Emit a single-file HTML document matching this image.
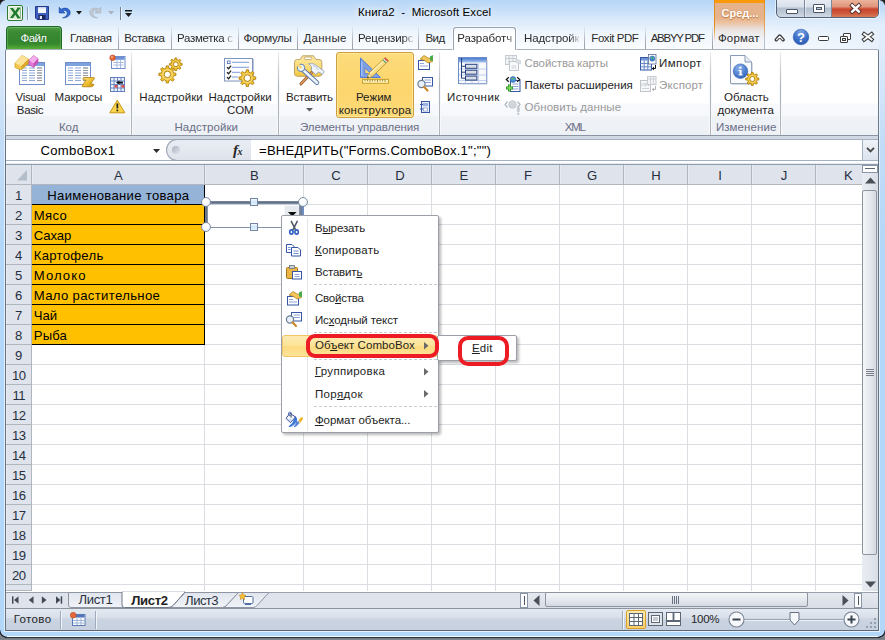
<!DOCTYPE html>
<html lang="ru"><head><meta charset="utf-8"><title>Книга2 - Microsoft Excel</title>
<style>
*{box-sizing:border-box;margin:0;padding:0}
html,body{width:885px;height:640px;overflow:hidden}
body{position:relative;font-family:"Liberation Sans","DejaVu Sans",sans-serif;font-size:12px;color:#1e1e1e;background:#c9ddf3}
div,span{position:absolute;white-space:nowrap}
svg{position:absolute;overflow:visible}
u{text-decoration:underline;text-underline-offset:1px;text-decoration-thickness:1px}
#frame{left:0;top:0;width:885px;height:640px;background:linear-gradient(180deg,#b6d6f7 0,#c6dff8 10px,#d9e9fb 19px,#e3effc 27px,#dfecfb 49px,#c3ddf8 140px,#b3d7f9 250px,#b3d7f9 640px)}
.tsep{top:27px;width:1px;height:22px;background:linear-gradient(rgba(154,161,171,.1),#a4abb6 70%,#9aa1ab)}
#tabglow{left:6px;top:25px;width:873px;height:24px;background:linear-gradient(rgba(255,255,255,0) 0,rgba(255,255,255,.45) 8px,rgba(255,255,255,.88) 100%);-webkit-mask-image:linear-gradient(90deg,#000 0,#000 86%,rgba(0,0,0,.35) 100%);mask-image:linear-gradient(90deg,#000 0,#000 86%,rgba(0,0,0,.35) 100%)}
#ribbon{left:5px;top:49px;width:874px;height:87px;background:linear-gradient(#ffffff 0,#ffffff 53px,#f8f9fc 54px,#f7f8fb 65px,#eff2f6 67px,#edf0f4 86px);border:1px solid #8b95a3;border-top-color:#a9b0ba;border-left-color:#7b8594;border-right-color:#6f7987;border-radius:2px 2px 0 0}
.gsep{top:52px;width:3px;height:83px;margin-left:-1px;background:linear-gradient(rgba(176,181,188,.25),#b0b5bc 40%);border-left:1px solid rgba(255,255,255,.9);border-right:1px solid rgba(255,255,255,.9)}
.ch{top:165px;height:20px;background:#dfe3ec;border-right:1px solid #b1b5bc;border-bottom:1px solid #b1b5bc;box-shadow:inset 1px 0 0 #e8ebf1}
.rh{left:6px;width:26px;height:20px;background:#dfe3ec;border-right:1px solid #b1b5bc;border-bottom:1px solid #b1b5bc;box-shadow:inset 1px 0 0 #e9edf3}
.msep{left:314px;width:123px;height:1px;background:repeating-linear-gradient(90deg,#c8cbd0 0,#c8cbd0 3px,transparent 3px,transparent 5px)}
</style></head><body>
<div id="frame"></div><div id="tabglow"></div>
<div style="left:358.0px;top:6px;font-size:11.5px;line-height:12px;color:#000;letter-spacing:0.09px;text-shadow:0 0 7px rgba(255,255,255,.95),0 0 12px rgba(255,255,255,.8),0 0 16px rgba(255,255,255,.6);">Книга2&nbsp; -&nbsp; Microsoft Excel</div><svg style="left:7px;top:5px" width="16" height="16" viewBox="0 0 16 16"><rect x=".5" y=".5" width="15" height="15" rx="1.5" fill="#f4f9f1" stroke="#2c7a30"/><rect x="2" y="2" width="12" height="12" fill="#dcecd5"/><path d="M3 3 L6.6 8 L3 13 H6 L8.2 9.8 L10.4 13 H13.4 L9.8 8 L13.4 3 H10.4 L8.2 6.2 L6 3Z" fill="#1d7a2b"/><path d="M10 2.5H13.5V13.5H10" fill="none" stroke="#7fb27c" stroke-width=".8"/></svg>
<div style="left:27px;top:7px;width:1px;height:13px;background:#8a9db5"></div><div style="left:28px;top:7px;width:1px;height:13px;background:#eef4fb"></div>
<svg style="left:35px;top:6px" width="14" height="14" viewBox="0 0 14 14"><path d="M.5 .5H13.5V13.5H2L.5 12Z" fill="#3f5fbe" stroke="#233a86"/><rect x="3" y="1" width="8" height="6" fill="#f3f6fc"/><rect x="3" y="1" width="8" height="1.4" fill="#c9d4ee"/><rect x="3.5" y="9" width="7" height="4.5" fill="#1b275f"/><rect x="4.8" y="10" width="2.2" height="3" fill="#e4eaf8"/></svg>
<svg style="left:58px;top:6px" width="13" height="13" viewBox="0 0 13 13"><path d="M1.2 1.2 L1.2 7 L7 7 L4.9 4.9 C6.6 3.8 9.4 4.6 9.3 7.2 C9.2 9.6 7 11.2 4.6 11.9 C9 12 12.2 9.8 12.2 6.6 C12.2 2.6 7 0.8 3.2 3.2Z" fill="#3068d0" stroke="#1c449c" stroke-width=".6"/></svg>
<svg style="left:76px;top:11px" width="6" height="4"><path d="M0 0H6L3 3.5Z" fill="#1a1a1a"/></svg>
<svg style="left:89px;top:6px" width="13" height="13" viewBox="0 0 13 13"><path d="M11.8 1.2 L11.8 7 L6 7 L8.1 4.9 C6.4 3.8 3.6 4.6 3.7 7.2 C3.8 9.6 6 11.2 8.4 11.9 C4 12 .8 9.8 .8 6.6 C.8 2.6 6 0.8 9.8 3.2Z" fill="#c0c8d4" stroke="#a3adbb" stroke-width=".6"/></svg>
<svg style="left:108px;top:11px" width="6" height="4"><path d="M0 0H6L3 3.5Z" fill="#a9b1bd"/></svg>
<div style="left:120px;top:7px;width:1px;height:13px;background:#6f8098"></div><div style="left:121px;top:7px;width:1px;height:13px;background:#eef4fb"></div>
<svg style="left:125px;top:10px" width="8" height="8"><rect x="0" y="0" width="7" height="1.5" fill="#1a1a1a"/><path d="M0 3H7L3.5 7Z" fill="#1a1a1a"/></svg>
<div style="left:776px;top:-1px;width:103px;height:19px;border:1px solid #55637a;border-radius:0 0 5px 5px;background:linear-gradient(#e6ebf2 0,#d9e0ea 40%,#b4c0cf 48%,#bcc7d5 70%,#d3dbe6 100%);overflow:hidden;box-shadow:0 0 0 1px rgba(255,255,255,.5)">
<div style="left:27px;top:0;width:1px;height:19px;background:#7b889b"></div><div style="left:28px;top:0;width:1px;height:19px;background:rgba(255,255,255,.5)"></div>
<div style="left:54px;top:0;width:1px;height:19px;background:#7b889b"></div>
<div style="left:55px;top:0;width:48px;height:19px;background:linear-gradient(#eab49a 0,#e0957c 35%,#c8452c 48%,#cd5a3e 70%,#df8f66 100%)"></div>
<div style="left:9px;top:9px;width:12px;height:5px;border:1px solid #4a5567;background:#fff;border-radius:1px"></div>
<div style="left:36px;top:4px;width:12px;height:9px;border:1px solid #4a5567;background:#fff;border-radius:1px"></div><div style="left:39px;top:7px;width:6px;height:3px;border:1px solid #4a5567;background:#c4cedb"></div>
<svg style="left:73px;top:4px" width="11" height="9"><path d="M2.200 1.500 L8.800 7.500 M8.800 1.500 L2.200 7.500" stroke="#4b2f2a" stroke-width="4.200" stroke-linecap="square"/><path d="M2.200 1.500 L8.800 7.500 M8.800 1.500 L2.200 7.500" stroke="#fff" stroke-width="2.400" stroke-linecap="square"/></svg>
</div>
<div style="left:0;top:0;width:5px;height:5px;background:radial-gradient(circle at 6px 6px,rgba(0,0,0,0) 5px,#1c1c1c 6.500px)"></div>
<div style="left:880px;top:0;width:5px;height:5px;background:radial-gradient(circle at -1px 6px,rgba(0,0,0,0) 5px,#1c1c1c 6.500px)"></div>
<div style="left:714px;top:0;width:51px;height:49px;background:linear-gradient(#fb9a06 0,#f89a0e 3px,#e4b28b 3.5px,#e5b48e 18px,#ecc09b 22px,#e8d2c4 26px,#ebe4e2 30px,#f1f2f6 38px,#f7f8fb 49px)"></div><div style="left:714px;top:0;width:1px;height:40px;background:linear-gradient(#e88a1c 0,#e88a1c 26px,rgba(232,170,110,.2) 40px)"></div><div style="left:764px;top:0;width:1px;height:49px;background:linear-gradient(#e88a1c 0,#e9a252 26px,#b9c4d4 40px,#aebdd0 49px)"></div>
<div style="left:721.5px;top:7px;font-size:11px;line-height:12px;color:#fff;letter-spacing:0.01px;font-weight:bold;text-shadow:0 1px 1px #c47a45,0 0 2px #c98a5a;">Сред...</div><div style="left:6px;top:26px;width:56px;height:24px;background:linear-gradient(#4e9d47 0,#3b8b34 5px,#34852f 14px,#378a2f 17px,#4ba033 20px,#68bd39 24px);border:1px solid #1d6a28;border-bottom:0;border-radius:4px 4px 0 0;box-shadow:inset 0 1px 0 #6fb766,inset 1px 0 0 rgba(120,190,110,.45),inset -1px 0 0 rgba(120,190,110,.45)"></div>
<div style="left:20.5px;top:32px;font-size:11.5px;line-height:12px;color:#fff;letter-spacing:-0.59px;text-shadow:0 0 1px #1d5a20;">Файл</div><div class="tsep" style="left:118px"></div><div class="tsep" style="left:171px"></div><div class="tsep" style="left:238px"></div><div class="tsep" style="left:297px"></div><div class="tsep" style="left:352px"></div><div class="tsep" style="left:418px"></div><div class="tsep" style="left:584px"></div><div class="tsep" style="left:645px"></div><div class="tsep" style="left:712px"></div>
<div style="left:453px;top:27px;width:63px;height:23px;background:linear-gradient(#f4f8fc,#fff 8px);border:1px solid #98a1ae;border-bottom:0;border-radius:3px 3px 0 0;box-shadow:0 0 0 1px rgba(255,255,255,.6);z-index:3"></div>
<div style="left:70.1px;top:32px;font-size:11.5px;line-height:12px;color:#2b2b2b;letter-spacing:-0.31px;">Главная</div><div style="left:124.2px;top:32px;font-size:11.5px;line-height:12px;color:#2b2b2b;letter-spacing:-0.32px;">Вставка</div><div style="left:177.0px;top:32px;font-size:11.5px;line-height:12px;color:#2b2b2b;letter-spacing:-0.29px;-webkit-mask-image:linear-gradient(90deg,#000 82%,rgba(0,0,0,.15) 100%);mask-image:linear-gradient(90deg,#000 82%,rgba(0,0,0,.15) 100%);">Разметка с</div><div style="left:243.5px;top:32px;font-size:11.5px;line-height:12px;color:#2b2b2b;letter-spacing:-0.29px;">Формулы</div><div style="left:303.5px;top:32px;font-size:11.5px;line-height:12px;color:#2b2b2b;letter-spacing:0.25px;">Данные</div><div style="left:358.1px;top:32px;font-size:11.5px;line-height:12px;color:#2b2b2b;letter-spacing:-0.15px;-webkit-mask-image:linear-gradient(90deg,#000 82%,rgba(0,0,0,.15) 100%);mask-image:linear-gradient(90deg,#000 82%,rgba(0,0,0,.15) 100%);">Рецензирс</div><div style="left:425.4px;top:32px;font-size:11.5px;line-height:12px;color:#2b2b2b;letter-spacing:-0.45px;">Вид</div><div style="left:524.0px;top:32px;font-size:11.5px;line-height:12px;color:#2b2b2b;letter-spacing:-0.15px;-webkit-mask-image:linear-gradient(90deg,#000 82%,rgba(0,0,0,.15) 100%);mask-image:linear-gradient(90deg,#000 82%,rgba(0,0,0,.15) 100%);">Надстройк</div><div style="left:591.3px;top:32px;font-size:11.5px;line-height:12px;color:#2b2b2b;letter-spacing:-0.44px;">Foxit PDF</div><div style="left:650.7px;top:32px;font-size:11.5px;line-height:12px;color:#2b2b2b;letter-spacing:-1.26px;">ABBYY PDF</div><div style="left:718.0px;top:32px;font-size:11.5px;line-height:12px;color:#2b2b2b;letter-spacing:0.13px;">Формат</div><div style="left:457.3px;top:32px;font-size:11.5px;line-height:12px;color:#2b2b2b;letter-spacing:-0.09px;z-index:4;-webkit-mask-image:linear-gradient(90deg,#000 86%,rgba(0,0,0,.55) 100%);mask-image:linear-gradient(90deg,#000 86%,rgba(0,0,0,.55) 100%);">Разработч</div><svg style="left:774px;top:32px" width="12" height="10"><path d="M2.200 7.800 L5.700 4 L9.200 7.800" fill="none" stroke="#3a3a3a" stroke-width="3.400" stroke-linejoin="round" stroke-linecap="round"/><path d="M2.600 7.600 L5.700 4.300 L8.800 7.600" fill="none" stroke="#fff" stroke-width="1.200" stroke-linecap="round"/></svg>
<svg style="left:793px;top:29px" width="17" height="17"><defs><radialGradient id="hg" cx=".5" cy=".2" r=".9"><stop offset="0" stop-color="#7fa6e6"/><stop offset=".55" stop-color="#3a6ec6"/><stop offset="1" stop-color="#2a56aa"/></radialGradient></defs><circle cx="8" cy="8" r="7.800" fill="url(#hg)" stroke="#3562b4" stroke-width=".6"/><text x="8" y="12.600" text-anchor="middle" font-family="Liberation Sans,sans-serif" font-weight="bold" font-size="13" fill="#fff">?</text></svg>
<div style="left:818px;top:36px;width:11px;height:5px;border:1.500px solid #3b3b3b;background:#fff;border-radius:1.500px"></div>
<div style="left:843px;top:32.500px;width:8px;height:7px;border:1.500px solid #3b3b3b;background:#fff;border-radius:1px"></div><div style="left:839.500px;top:35.500px;width:8px;height:7.500px;border:1.500px solid #3b3b3b;background:#fff;border-radius:1px"></div><div style="left:841.500px;top:38px;width:4px;height:3px;border:1px solid #3b3b3b;background:#dfe6f0"></div>
<svg style="left:862px;top:32px" width="12" height="10"><path d="M2.200 2 L9.600 7.600 M9.600 2 L2.200 7.600" stroke="#3a3a3a" stroke-width="4" stroke-linecap="square"/><path d="M2.200 2 L9.600 7.600 M9.600 2 L2.200 7.600" stroke="#fff" stroke-width="1.900" stroke-linecap="square"/></svg>
<div id="ribbon"></div>
<div class="gsep" style="left:131px"></div><div class="gsep" style="left:278px"></div><div class="gsep" style="left:439px"></div><div class="gsep" style="left:710px"></div><div class="gsep" style="left:780px"></div><div style="left:58.9px;top:121px;font-size:11.5px;line-height:12px;color:#6a6e86;letter-spacing:0.02px;">Код</div><div style="left:174.5px;top:121px;font-size:11.5px;line-height:12px;color:#6a6e86;letter-spacing:0.03px;">Надстройки</div><div style="left:300.1px;top:121px;font-size:11.5px;line-height:12px;color:#6a6e86;letter-spacing:-0.11px;">Элементы управления</div><div style="left:564.7px;top:121px;font-size:11.5px;line-height:12px;color:#6a6e86;letter-spacing:-1.17px;">XML</div><div style="left:715.9px;top:121px;font-size:11.5px;line-height:12px;color:#6a6e86;letter-spacing:0.08px;">Изменение</div>
<div style="left:336px;top:52px;width:78px;height:66px;border:1px solid #cf9f3c;border-radius:3px;background:linear-gradient(#fcdc7c 0,#fdd872 30%,#fcd56d 60%,#fdda78 100%);box-shadow:inset 0 0 0 1px rgba(255,236,170,.7)"></div>
<div style="left:15.4px;top:91px;font-size:11.5px;line-height:12px;color:#1e1e1e;letter-spacing:-0.18px;">Visual</div><div style="left:16.8px;top:104px;font-size:11.5px;line-height:12px;color:#1e1e1e;letter-spacing:-0.33px;">Basic</div><div style="left:54.5px;top:91px;font-size:11.5px;line-height:12px;color:#1e1e1e;letter-spacing:-0.04px;">Макросы</div><div style="left:139.3px;top:91px;font-size:11.5px;line-height:12px;color:#1e1e1e;letter-spacing:0.03px;">Надстройки</div><div style="left:208.4px;top:91px;font-size:11.5px;line-height:12px;color:#1e1e1e;letter-spacing:0.03px;">Надстройки</div><div style="left:227.1px;top:104px;font-size:11.5px;line-height:12px;color:#1e1e1e;letter-spacing:-0.22px;">COM</div><div style="left:286.1px;top:91px;font-size:11.5px;line-height:12px;color:#1e1e1e;letter-spacing:-0.25px;">Вставить</div><svg style="left:306px;top:108px" width="7" height="4"><path d="M0 0H7L3.5 3.5Z" fill="#5a5a5a"/></svg><div style="left:355.9px;top:91px;font-size:11.5px;line-height:12px;color:#1e1e1e;letter-spacing:0.04px;">Режим</div><div style="left:338.7px;top:104px;font-size:11.5px;line-height:12px;color:#1e1e1e;letter-spacing:0.19px;">конструктора</div><div style="left:447.0px;top:91px;font-size:11.5px;line-height:12px;color:#1e1e1e;letter-spacing:0.46px;">Источник</div><div style="left:724.1px;top:91px;font-size:11.5px;line-height:12px;color:#1e1e1e;letter-spacing:-0.07px;">Область</div><div style="left:717.4px;top:104px;font-size:11.5px;line-height:12px;color:#1e1e1e;letter-spacing:0.05px;">документа</div>
<div style="left:524.6px;top:57px;font-size:11.5px;line-height:12px;color:#9a9a9a;letter-spacing:-0.13px;">Свойства карты</div><div style="left:524.6px;top:79px;font-size:11.5px;line-height:12px;color:#1e1e1e;letter-spacing:-0.02px;">Пакеты расширения</div><div style="left:524.6px;top:101px;font-size:11.5px;line-height:12px;color:#9a9a9a;letter-spacing:0.05px;">Обновить данные</div><div style="left:659.0px;top:57px;font-size:11.5px;line-height:12px;color:#1e1e1e;letter-spacing:0.42px;">Импорт</div><div style="left:659.0px;top:79px;font-size:11.5px;line-height:12px;color:#9a9a9a;letter-spacing:0.15px;">Экспорт</div>
<svg style="left:0;top:0" width="885" height="140"><defs><linearGradient id="gold" x1="0" y1="0" x2="1" y2="1"><stop offset="0" stop-color="#fbe69a"/><stop offset=".5" stop-color="#efc232"/><stop offset="1" stop-color="#c9940f"/></linearGradient><linearGradient id="bluehdr" x1="0" y1="0" x2="0" y2="1"><stop offset="0" stop-color="#4a7bd0"/><stop offset="1" stop-color="#a9c5ef"/></linearGradient><linearGradient id="steel" x1="0" y1="0" x2="1" y2="1"><stop offset="0" stop-color="#f4f8fd"/><stop offset="1" stop-color="#8ea6c8"/></linearGradient></defs><rect x="19.5" y="62.5" width="25" height="22" fill="#fff" stroke="#6e8fcb"/><rect x="20" y="63" width="24" height="3" fill="#7ea2de"/><path d="M22 68H27M29 68H35M37 68H42" stroke="#8fa9db" stroke-width="1"/><path d="M37 68H42" stroke="#9a9a9a" stroke-width="1"/><path d="M22 70.5H27M29 70.5H35M37 70.5H42" stroke="#8fa9db" stroke-width="1"/><path d="M37 70.5H42" stroke="#9a9a9a" stroke-width="1"/><path d="M22 73.0H27M29 73.0H35M37 73.0H42" stroke="#8fa9db" stroke-width="1"/><path d="M37 73.0H42" stroke="#9a9a9a" stroke-width="1"/><path d="M22 75.5H27M29 75.5H35M37 75.5H42" stroke="#8fa9db" stroke-width="1"/><path d="M37 75.5H42" stroke="#9a9a9a" stroke-width="1"/><path d="M22 78.0H27M29 78.0H35M37 78.0H42" stroke="#8fa9db" stroke-width="1"/><path d="M37 78.0H42" stroke="#9a9a9a" stroke-width="1"/><path d="M22 80.5H27M29 80.5H35M37 80.5H42" stroke="#8fa9db" stroke-width="1"/><path d="M37 80.5H42" stroke="#9a9a9a" stroke-width="1"/><path d="M15 63 L22 55.5 L28.5 59 L28.5 63.5 L21 70 L15 67.5Z" fill="#f2c94c" stroke="#c99a1e" stroke-width=".7"/><path d="M15 63 L22 55.5 L28.5 59 L21.5 66Z" fill="#fbe39a"/><path d="M21.5 66 L28.5 59 L28.5 63.5 L21 70Z" fill="#d9a62a"/><path d="M29 60 L33.5 55.5 L38 58.5 L38 62.5 L33.5 67.5 L29 64.5Z" fill="#e27ad6" stroke="#b14aa6" stroke-width=".7"/><path d="M29 60 L33.5 55.5 L38 58.5 L33.5 63.5Z" fill="#f3b0ec"/><path d="M33.5 63.5 L38 58.5 L38 62.5 L33.5 67.5Z" fill="#c455b8"/><rect x="65.5" y="62.5" width="25" height="22" fill="#fff" stroke="#6e8fcb"/><rect x="66" y="63" width="24" height="3" fill="#7ea2de"/><path d="M68 68H73M75 68H81M83 68H88" stroke="#8fa9db" stroke-width="1"/><path d="M83 68H88" stroke="#9a9a9a" stroke-width="1"/><path d="M68 70.5H73M75 70.5H81M83 70.5H88" stroke="#8fa9db" stroke-width="1"/><path d="M83 70.5H88" stroke="#9a9a9a" stroke-width="1"/><path d="M68 73.0H73M75 73.0H81M83 73.0H88" stroke="#8fa9db" stroke-width="1"/><path d="M83 73.0H88" stroke="#9a9a9a" stroke-width="1"/><path d="M68 75.5H73M75 75.5H81M83 75.5H88" stroke="#8fa9db" stroke-width="1"/><path d="M83 75.5H88" stroke="#9a9a9a" stroke-width="1"/><path d="M68 78.0H73M75 78.0H81M83 78.0H88" stroke="#8fa9db" stroke-width="1"/><path d="M83 78.0H88" stroke="#9a9a9a" stroke-width="1"/><path d="M68 80.5H73M75 80.5H81M83 80.5H88" stroke="#8fa9db" stroke-width="1"/><path d="M83 80.5H88" stroke="#9a9a9a" stroke-width="1"/><path d="M84 77.5 H93.5 Q95 77.5 94 79 L90.5 84 H93 Q94.5 84 93.5 85.5 Q92.5 86.8 90.5 86.8 H83 Q81.5 86.8 82.5 85.3 L86 80 H84 Q82.6 80 83 78.5 Q83.3 77.5 84 77.5Z" fill="url(#gold)" stroke="#b07e0c" stroke-width=".8"/><rect x="111.500" y="56.500" width="13.500" height="12" fill="#fff" stroke="#6e8fcb"/><rect x="112" y="57" width="12.500" height="2.800" fill="#6d93d6"/><path d="M113.500 62.500H123.500M113.500 65H123.500M117 60V68M120.500 60V68" stroke="#a9bce0"/><circle cx="112.600" cy="57.800" r="2.800" fill="#e4683a" stroke="#b8441b" stroke-width=".6"/><circle cx="111.900" cy="57" r="1" fill="#f6b49a"/><rect x="110.5" y="77.5" width="14" height="14" fill="#eef2fa" stroke="#5f7fbf"/><path d="M110.5 81H124.5M110.5 84.5H124.5M110.5 88H124.5M114 77.5V91.5M117.5 77.5V91.5M121 77.5V91.5" stroke="#5f7fbf" stroke-width=".9"/><rect x="114.5" y="85" width="3" height="2.6" fill="#d9534f"/><rect x="121.5" y="85" width="3" height="2.6" fill="#d9534f"/><path d="M116 82.5 L119.5 80.5 V81.8 H123 V83.4 H119.5 V84.5Z" fill="#111"/><path d="M117.3 100.2 L124.8 112.8 H109.8Z" fill="#fbd44c" stroke="#c89612" stroke-width="1" stroke-linejoin="round"/><rect x="116.5" y="103.5" width="1.7" height="5" fill="#222"/><rect x="116.5" y="109.6" width="1.7" height="1.7" fill="#222"/><path d="M173.53 72.93 L175.92 73.26 L175.92 75.54 L173.53 75.87 L172.77 77.69 L174.24 79.62 L172.62 81.24 L170.69 79.77 L168.87 80.53 L168.54 82.92 L166.26 82.92 L165.93 80.53 L164.11 79.77 L162.18 81.24 L160.56 79.62 L162.03 77.69 L161.27 75.87 L158.88 75.54 L158.88 73.26 L161.27 72.93 L162.03 71.11 L160.56 69.18 L162.18 67.56 L164.11 69.03 L165.93 68.27 L166.26 65.88 L168.54 65.88 L168.87 68.27 L170.69 69.03 L172.62 67.56 L174.24 69.18 L172.77 71.11Z" fill="#efc22f" stroke="#b07e0c" stroke-width=".9" stroke-linejoin="round"/><circle cx="167.4" cy="74.4" r="4.75" fill="none" stroke="#f9e08a" stroke-width="1.50" opacity=".8"/><circle cx="167.4" cy="74.4" r="3.2" fill="#fff" stroke="#b07e0c" stroke-width=".9"/><path d="M180.27 63.23 L182.14 63.45 L182.14 65.15 L180.27 65.37 L179.72 66.70 L180.89 68.18 L179.68 69.39 L178.20 68.22 L176.87 68.77 L176.65 70.64 L174.95 70.64 L174.73 68.77 L173.40 68.22 L171.92 69.39 L170.71 68.18 L171.88 66.70 L171.33 65.37 L169.46 65.15 L169.46 63.45 L171.33 63.23 L171.88 61.90 L170.71 60.42 L171.92 59.21 L173.40 60.38 L174.73 59.83 L174.95 57.96 L176.65 57.96 L176.87 59.83 L178.20 60.38 L179.68 59.21 L180.89 60.42 L179.72 61.90Z" fill="#efc22f" stroke="#b07e0c" stroke-width=".9" stroke-linejoin="round"/><circle cx="175.8" cy="64.3" r="3.50" fill="none" stroke="#f9e08a" stroke-width="0.60" opacity=".8"/><circle cx="175.8" cy="64.3" r="2.4" fill="#fff" stroke="#b07e0c" stroke-width=".9"/><rect x="224.5" y="58.5" width="28" height="22.5" fill="#fdfdfe" stroke="#7d96c4"/><path d="M225 81.5H253M253.5 59V81.5" stroke="#bcc6d8" stroke-width="1"/><rect x="227.5" y="61" width="2.6" height="2.6" fill="#fff" stroke="#4c6fbd" stroke-width=".8"/><path d="M232 62.3H249M232 67.3H249M232 72.3H240M232 77H238" stroke="#7d9bd6" stroke-width="1"/><path d="M227 67.2 L228.6 68.8 L231 65.6" fill="none" stroke="#222" stroke-width="1.3"/><path d="M227 72.2 L228.6 73.8 L231 70.6" fill="none" stroke="#222" stroke-width="1.3"/><path d="M227 77.2 L228.6 78.8 L231 75.6" fill="none" stroke="#222" stroke-width="1.3"/><path d="M253.33 76.68 L255.73 76.98 L255.73 79.22 L253.33 79.52 L252.60 81.29 L254.08 83.20 L252.50 84.78 L250.59 83.30 L248.82 84.03 L248.52 86.43 L246.28 86.43 L245.98 84.03 L244.21 83.30 L242.30 84.78 L240.72 83.20 L242.20 81.29 L241.47 79.52 L239.07 79.22 L239.07 76.98 L241.47 76.68 L242.20 74.91 L240.72 73.00 L242.30 71.42 L244.21 72.90 L245.98 72.17 L246.28 69.77 L248.52 69.77 L248.82 72.17 L250.59 72.90 L252.50 71.42 L254.08 73.00 L252.60 74.91Z" fill="#efc22f" stroke="#b07e0c" stroke-width=".9" stroke-linejoin="round"/><circle cx="247.4" cy="78.1" r="4.70" fill="none" stroke="#f9e08a" stroke-width="1.20" opacity=".8"/><circle cx="247.4" cy="78.1" r="3.3" fill="#fff" stroke="#b07e0c" stroke-width=".9"/><defs><linearGradient id="tbx" x1="0" y1="0" x2="0" y2="1"><stop offset="0" stop-color="#fdeaa4"/><stop offset=".55" stop-color="#fbdc78"/><stop offset="1" stop-color="#f3c63c"/></linearGradient></defs><path d="M297.500 59.500 H300 L302.500 55.800 H313.500 L316 59.500 H319 Q321.800 59.500 321.800 62.300 V73.500 Q321.800 76.300 319 76.300 H297.500 Q294.500 76.300 294.500 73.500 V62.300 Q294.500 59.500 297.500 59.500Z" fill="url(#tbx)" stroke="#b99a5a" stroke-width=".9"/><rect x="304.300" y="57" width="7.500" height="2.600" rx="1.300" fill="#fff" stroke="#b99a5a" stroke-width=".8"/><path d="M301 83.800 L312.500 71.800" stroke="#9c5a24" stroke-width="3" stroke-linecap="round"/><path d="M301 83.800 L312.500 71.800" stroke="#dda066" stroke-width="1.300" stroke-linecap="round"/><path d="M308.500 63.600 Q314.500 62.500 318.500 67 L324.300 71.500 L322.300 74.300 L318.800 72 L315.500 74.500 L311.500 70.500 Q313 66.500 308.500 63.600Z" fill="#f1f5fa" stroke="#8a9cb8" stroke-width=".8" stroke-linejoin="round"/><path d="M313 65.500 Q316.500 66.500 318 70" stroke="#c3cfe0" stroke-width="1.200" fill="none"/><path d="M302 69 L317 82.800" stroke="#5f7ea9" stroke-width="4.600" stroke-linecap="round"/><path d="M302 69 L317 82.800" stroke="#eef3fa" stroke-width="2.600" stroke-linecap="round"/><circle cx="301" cy="67.800" r="3.700" fill="#eef3fa" stroke="#5f7ea9" stroke-width="1"/><path d="M297 63.800 L301.300 68" stroke="#fbdc78" stroke-width="2.800"/><path d="M360.500 58 V77.500 H380.500Z" fill="#7fa1e4" stroke="#4f7bd6" stroke-width="1" stroke-linejoin="round"/><path d="M364.800 67.800 V73.600 H370.800Z" fill="#fbd672" stroke="#4f7bd6" stroke-width=".8"/><path d="M361.700 61.500 V76.300" stroke="#a9c3f3" stroke-width="1.200"/><path d="M367.300 78 L368.800 73.200 L385.200 57.600 L388.600 60.800 L372.200 76.600Z" fill="#fbdc80" stroke="#b08a2a" stroke-width=".8" stroke-linejoin="round"/><path d="M369.800 73.800 L385.800 58.600" stroke="#fff3c4" stroke-width="1.100"/><path d="M385.200 57.600 L388.600 60.800 L387.300 62 L383.900 58.800Z" fill="#e0524c"/><path d="M383.900 58.800 L387.300 62 L386.500 62.800 L383.100 59.600Z" fill="#dfe6ee"/><path d="M383.100 59.600 L386.500 62.800 L385.900 63.400 L382.500 60.200Z" fill="#3d9a55"/><path d="M367.300 78 L368.800 73.200 L372.200 76.600Z" fill="#f8e6c4" stroke="#b08a2a" stroke-width=".6"/><path d="M367.300 78 L367.900 76.200 L369.100 77.400Z" fill="#222"/><rect x="362.500" y="79.300" width="26" height="4" fill="#fdf0b4" stroke="#c29a22" stroke-width=".9"/><path d="M365 79.500V81.300M367.500 79.500V81.300M370 79.500V82M372.500 79.500V81.300M375 79.500V81.300M377.500 79.500V82M380 79.500V81.300M382.500 79.500V81.300M385 79.500V82" stroke="#9a7418" stroke-width=".8"/><rect x="418.5" y="60.5" width="11" height="9" fill="#fff" stroke="#3557a5"/><path d="M420 63.5H424M420 66H428" stroke="#8fa6d4"/><path d="M420 59 L424 55.5 L429 58.5 L432.5 56 V61.5 L428 63 L424.5 60.5Z" fill="#f2c65a" stroke="#a97a14" stroke-width=".7"/><path d="M430 56.5 L432.8 55 V61 L430 60.5Z" fill="#3fae49"/><rect x="422.5" y="77.5" width="10" height="8.5" fill="#fff" stroke="#3557a5"/><path d="M424.5 80H431M424.5 82.5H431" stroke="#8fa6d4"/><circle cx="421.5" cy="84" r="3.6" fill="#e8f0fb" stroke="#6b7c93" stroke-width="1.2"/><path d="M424 86.8 L427.5 90.5" stroke="#c98a2b" stroke-width="2.2" stroke-linecap="round"/><rect x="421.5" y="101.5" width="8" height="11" fill="#eaf0fa" stroke="#3557a5"/><rect x="422.8" y="103" width="5.4" height="3.2" fill="#9bb4e2"/><path d="M420 104.5H423M420 109H423" stroke="#3557a5"/><rect x="423.5" y="108" width="4" height="3" fill="#fff" stroke="#6d86bf" stroke-width=".6"/><rect x="458.5" y="57.5" width="28" height="26" fill="#f7f9fd" stroke="#6d8ccb"/><rect x="459" y="58" width="27" height="4.5" fill="url(#bluehdr)"/><path d="M459 69H486M459 75H486M459 80.5H486M478.5 62.5V83M472 80.5V83M465.5 80.5V83" stroke="#c3d2ec" stroke-width="1"/><path d="M487 60V84H460" stroke="#b9c4d8" fill="none"/><path d="M461.5 58 V78.2 H465.5 M461.5 66.3H465.5M461.5 72.2H465.5" fill="none" stroke="#25407f" stroke-width="1"/><rect x="465.5" y="64.3" width="11.4" height="4" fill="#d9dfe8" stroke="#25407f" stroke-width="1"/><rect x="465.5" y="70.2" width="11.4" height="4" fill="#d9dfe8" stroke="#25407f" stroke-width="1"/><rect x="465.5" y="76.1" width="11.4" height="4" fill="#d9dfe8" stroke="#25407f" stroke-width="1"/><g opacity=".55"><rect x="505.5" y="55.5" width="11" height="9" fill="#e9edf2" stroke="#9aa3b0"/><path d="M505.5 58.5H516.5M509 55.5V64.5M513 55.5V64.5" stroke="#9aa3b0"/><rect x="509.5" y="61.5" width="9" height="9" fill="#f5f6f8" stroke="#8f98a5"/><path d="M511.5 66H516.5M511.5 68H516.5" stroke="#a8b0bb"/><path d="M516 59 L520.5 60.5 V64 L516 62.5Z" fill="#c3c9d2" stroke="#9aa3b0" stroke-width=".6"/></g><rect x="510.500" y="80.500" width="9.500" height="11" fill="#fff" stroke="#3557a5"/><path d="M512.5 84H518.5M512.5 86.500H518.5M512.5 89H518.5" stroke="#8fa6d4"/><circle cx="513" cy="79.500" r="2.900" fill="#4a8fd8" stroke="#2a5da8" stroke-width=".6"/><path d="M511.500 79 Q513 77.500 514.500 79.500" stroke="#5fc05a" stroke-width="1.200" fill="none"/><path d="M508.800 77.200 L506.300 79.500 L508.800 81.800 M517.200 77.200 L519.700 79.500 L517.200 81.800" fill="none" stroke="#111" stroke-width="1.200"/><path d="M509.500 84.500 V91.500 M506 88 H513" stroke="#2b8a2b" stroke-width="3"/><path d="M509.500 85.300 V90.700 M506.800 88 H512.200" stroke="#7fdc5a" stroke-width="1.400"/><g opacity=".6"><circle cx="512.500" cy="104.500" r="3.800" fill="#b8bec8" stroke="#8e96a3" stroke-width=".7"/><path d="M507.500 101.500 L505 104.500 L507.500 107.500 M517.500 101.500 L520 104.500 L517.500 107.500" fill="none" stroke="#808894" stroke-width="1.200"/><rect x="517.200" y="107" width="2.200" height="5" rx="1" fill="#a9b0bb" stroke="#8e96a3" stroke-width=".5"/><circle cx="518.300" cy="113.800" r="1.100" fill="#8e96a3"/></g><rect x="640.500" y="57.500" width="11" height="12.500" fill="#f2f6fd" stroke="#3557a5"/><rect x="641" y="58" width="10" height="2.500" fill="#6d93d6"/><path d="M640.500 63.500H651.500M640.500 66.800H651.500M644.200 60.500V70M647.800 60.500V70" stroke="#5f7fbf" stroke-width=".9"/><rect x="648.500" y="54.500" width="7.500" height="9.500" fill="#fff" stroke="#5b6f94" stroke-width=".8"/><circle cx="652.300" cy="58.600" r="2.600" fill="#3d86d6" stroke="#2a5da8" stroke-width=".5"/><path d="M651 58 Q652.300 56.800 653.600 58.800" stroke="#5fc05a" stroke-width="1.100" fill="none"/><path d="M655.500 65 V68.500 H652.500 M654 67 L652.300 68.500 L654 70" fill="none" stroke="#111" stroke-width="1"/><g opacity=".55"><rect x="640.500" y="80.500" width="10" height="11" fill="#f0f2f5" stroke="#8e96a3"/><path d="M642.500 86 L641 84.500 M642.500 83 L641 84.500 M648 83 L649.500 84.500 L648 86" stroke="#8e96a3" fill="none"/><circle cx="645.300" cy="84.500" r="2" fill="#b8bec8"/><path d="M642 88.500H649" stroke="#a8b0bb"/><rect x="647.500" y="76.500" width="8.500" height="8" fill="#eceff3" stroke="#9aa3b0"/><path d="M647.500 79H656M650.500 76.500V84.500M653.300 76.500V84.500" stroke="#9aa3b0" stroke-width=".8"/><path d="M655.500 86 V89.500 H652.500 M654 88 L652.300 89.500 L654 91" fill="none" stroke="#777" stroke-width="1"/></g><path d="M730.500 55.500 H745 L751.500 62 V83.500 H730.500Z" fill="#fbfcfe" stroke="#8a9bb8"/><path d="M745 55.500 V62 H751.500" fill="#e4e9f2" stroke="#8a9bb8" stroke-linejoin="round"/><path d="M731.500 84.300H752.300V63" stroke="#c9d1de" fill="none"/><defs><radialGradient id="ig" cx=".4" cy=".3" r=".8"><stop offset="0" stop-color="#8fb3ec"/><stop offset=".7" stop-color="#4274c8"/><stop offset="1" stop-color="#2f5cae"/></radialGradient></defs><circle cx="740.500" cy="71.200" r="7.300" fill="url(#ig)" stroke="#3a64b0" stroke-width=".6"/><rect x="739.600" y="70" width="2" height="5" fill="#fff"/><rect x="738.600" y="70" width="2" height="1.100" fill="#fff"/><rect x="738.600" y="74.300" width="4" height="1.100" fill="#fff"/><circle cx="740.500" cy="67.600" r="1.200" fill="#fff"/><path d="M756.97 77.88 L758.84 78.12 L758.84 79.88 L756.97 80.12 L756.39 81.51 L757.55 83.00 L756.30 84.25 L754.81 83.09 L753.42 83.67 L753.18 85.54 L751.42 85.54 L751.18 83.67 L749.79 83.09 L748.30 84.25 L747.05 83.00 L748.21 81.51 L747.63 80.12 L745.76 79.88 L745.76 78.12 L747.63 77.88 L748.21 76.49 L747.05 75.00 L748.30 73.75 L749.79 74.91 L751.18 74.33 L751.42 72.46 L753.18 72.46 L753.42 74.33 L754.81 74.91 L756.30 73.75 L757.55 75.00 L756.39 76.49Z" fill="#efc22f" stroke="#b07e0c" stroke-width=".9" stroke-linejoin="round"/><circle cx="752.3" cy="79" r="3.65" fill="none" stroke="#f9e08a" stroke-width="0.70" opacity=".8"/><circle cx="752.3" cy="79" r="2.5" fill="#fff" stroke="#b07e0c" stroke-width=".9"/></svg>
<div style="left:6px;top:136px;width:873px;height:29px;background:#d1d8e4"></div><div style="left:6px;top:139px;width:174px;height:22px;background:#fff;border-top:1px solid #a4b1c3;border-bottom:1px solid #a4b1c3"></div><div style="left:250px;top:139px;width:613px;height:22px;background:#fff;border-top:1px solid #a4b1c3;border-bottom:1px solid #a4b1c3;border-left:1px solid #9aa3b0"></div><div style="left:6px;top:161px;width:873px;height:2px;background:#fdfdfe"></div><div style="left:6px;top:163px;width:873px;height:1px;background:#e6eaf1"></div><div style="left:6px;top:164px;width:873px;height:1px;background:#8f9cae"></div><div style="left:40.5px;top:143px;font-size:13.1px;line-height:15px;color:#000;letter-spacing:0.30px;">ComboBox1</div><svg style="left:153px;top:149px" width="7" height="4"><path d="M0 0H7L3.5 4Z" fill="#2e2e2e"/></svg><div style="left:166px;top:139px;width:85px;height:22px;border:1px solid #9aa3b0;border-right:0;border-radius:11px 0 0 11px;background:linear-gradient(#e9edf3,#dfe4ec)"></div><div style="left:172px;top:146px;width:8px;height:8px;border-radius:4px;background:linear-gradient(135deg,#a9b1bd,#e3e7ee)"></div><div style="left:233px;top:141px;font:italic bold 15px/18px 'Liberation Serif',serif;color:#262626;letter-spacing:-.5px">f<span style="position:static;font-size:10px">x</span></div><div style="left:259.1px;top:143px;font-size:13.1px;line-height:15px;color:#000;letter-spacing:0.20px;">=ВНЕДРИТЬ("Forms.ComboBox.1";"")</div><div style="left:862px;top:139px;width:17px;height:22px;border:1px solid #a4b1c3;background:linear-gradient(#f0f3f8,#dce3ed)"></div><svg style="left:866px;top:147px" width="9" height="6"><path d="M1 .8 L4.5 4.4 L8 .8" fill="none" stroke="#484848" stroke-width="1.9"/></svg>
<div style="left:6px;top:165px;width:857px;height:426px;background:#fff"></div><div style="left:32px;top:204px;width:831px;height:1px;background:#dadde1"></div><div style="left:32px;top:224px;width:831px;height:1px;background:#dadde1"></div><div style="left:32px;top:244px;width:831px;height:1px;background:#dadde1"></div><div style="left:32px;top:264px;width:831px;height:1px;background:#dadde1"></div><div style="left:32px;top:284px;width:831px;height:1px;background:#dadde1"></div><div style="left:32px;top:304px;width:831px;height:1px;background:#dadde1"></div><div style="left:32px;top:324px;width:831px;height:1px;background:#dadde1"></div><div style="left:32px;top:344px;width:831px;height:1px;background:#dadde1"></div><div style="left:32px;top:364px;width:831px;height:1px;background:#dadde1"></div><div style="left:32px;top:384px;width:831px;height:1px;background:#dadde1"></div><div style="left:32px;top:404px;width:831px;height:1px;background:#dadde1"></div><div style="left:32px;top:424px;width:831px;height:1px;background:#dadde1"></div><div style="left:32px;top:444px;width:831px;height:1px;background:#dadde1"></div><div style="left:32px;top:464px;width:831px;height:1px;background:#dadde1"></div><div style="left:32px;top:484px;width:831px;height:1px;background:#dadde1"></div><div style="left:32px;top:504px;width:831px;height:1px;background:#dadde1"></div><div style="left:32px;top:524px;width:831px;height:1px;background:#dadde1"></div><div style="left:32px;top:544px;width:831px;height:1px;background:#dadde1"></div><div style="left:32px;top:564px;width:831px;height:1px;background:#dadde1"></div><div style="left:32px;top:584px;width:831px;height:1px;background:#dadde1"></div><div style="left:204px;top:185px;width:1px;height:406px;background:#dadde1"></div><div style="left:303px;top:185px;width:1px;height:406px;background:#dadde1"></div><div style="left:367px;top:185px;width:1px;height:406px;background:#dadde1"></div><div style="left:431px;top:185px;width:1px;height:406px;background:#dadde1"></div><div style="left:495px;top:185px;width:1px;height:406px;background:#dadde1"></div><div style="left:559px;top:185px;width:1px;height:406px;background:#dadde1"></div><div style="left:623px;top:185px;width:1px;height:406px;background:#dadde1"></div><div style="left:687px;top:185px;width:1px;height:406px;background:#dadde1"></div><div style="left:751px;top:185px;width:1px;height:406px;background:#dadde1"></div><div style="left:815px;top:185px;width:1px;height:406px;background:#dadde1"></div>
<div class="ch" style="left:6px;width:26px"></div><svg style="left:17px;top:170px" width="10" height="11"><path d="M10 0V10.500H0Z" fill="#b4bdca"/></svg><div class="ch" style="left:32px;width:173px"></div><div style="left:114.1px;top:168px;font-size:13.1px;line-height:15px;color:#262f3e;letter-spacing:0.00px;">A</div><div class="ch" style="left:205px;width:99px"></div><div style="left:250.1px;top:168px;font-size:13.1px;line-height:15px;color:#262f3e;letter-spacing:0.00px;">B</div><div class="ch" style="left:304px;width:64px"></div><div style="left:331.3px;top:168px;font-size:13.1px;line-height:15px;color:#262f3e;letter-spacing:0.00px;">C</div><div class="ch" style="left:368px;width:64px"></div><div style="left:395.3px;top:168px;font-size:13.1px;line-height:15px;color:#262f3e;letter-spacing:0.00px;">D</div><div class="ch" style="left:432px;width:64px"></div><div style="left:459.6px;top:168px;font-size:13.1px;line-height:15px;color:#262f3e;letter-spacing:0.00px;">E</div><div class="ch" style="left:496px;width:64px"></div><div style="left:524.0px;top:168px;font-size:13.1px;line-height:15px;color:#262f3e;letter-spacing:0.00px;">F</div><div class="ch" style="left:560px;width:64px"></div><div style="left:586.9px;top:168px;font-size:13.1px;line-height:15px;color:#262f3e;letter-spacing:0.00px;">G</div><div class="ch" style="left:624px;width:64px"></div><div style="left:651.3px;top:168px;font-size:13.1px;line-height:15px;color:#262f3e;letter-spacing:0.00px;">H</div><div class="ch" style="left:688px;width:64px"></div><div style="left:718.2px;top:168px;font-size:13.1px;line-height:15px;color:#262f3e;letter-spacing:0.00px;">I</div><div class="ch" style="left:752px;width:64px"></div><div style="left:780.7px;top:168px;font-size:13.1px;line-height:15px;color:#262f3e;letter-spacing:0.00px;">J</div><div class="ch" style="left:816px;width:47px"></div><div style="left:844.1px;top:168px;font-size:13.1px;line-height:15px;color:#262f3e;letter-spacing:0.00px;">K</div>
<div class="rh" style="top:185px;height:20px;overflow:hidden"></div><div style="left:14.9px;top:188px;font-size:13.1px;line-height:15px;color:#262f3e;letter-spacing:0.00px;">1</div><div class="rh" style="top:205px;height:20px;overflow:hidden"></div><div style="left:14.9px;top:208px;font-size:13.1px;line-height:15px;color:#262f3e;letter-spacing:0.00px;">2</div><div class="rh" style="top:225px;height:20px;overflow:hidden"></div><div style="left:14.9px;top:228px;font-size:13.1px;line-height:15px;color:#262f3e;letter-spacing:0.00px;">3</div><div class="rh" style="top:245px;height:20px;overflow:hidden"></div><div style="left:14.9px;top:248px;font-size:13.1px;line-height:15px;color:#262f3e;letter-spacing:0.00px;">4</div><div class="rh" style="top:265px;height:20px;overflow:hidden"></div><div style="left:14.9px;top:268px;font-size:13.1px;line-height:15px;color:#262f3e;letter-spacing:0.00px;">5</div><div class="rh" style="top:285px;height:20px;overflow:hidden"></div><div style="left:14.9px;top:288px;font-size:13.1px;line-height:15px;color:#262f3e;letter-spacing:0.00px;">6</div><div class="rh" style="top:305px;height:20px;overflow:hidden"></div><div style="left:14.9px;top:308px;font-size:13.1px;line-height:15px;color:#262f3e;letter-spacing:0.00px;">7</div><div class="rh" style="top:325px;height:20px;overflow:hidden"></div><div style="left:14.9px;top:328px;font-size:13.1px;line-height:15px;color:#262f3e;letter-spacing:0.00px;">8</div><div class="rh" style="top:345px;height:20px;overflow:hidden"></div><div style="left:14.9px;top:348px;font-size:13.1px;line-height:15px;color:#262f3e;letter-spacing:0.00px;">9</div><div class="rh" style="top:365px;height:20px;overflow:hidden"></div><div style="left:12.1px;top:368px;font-size:13.1px;line-height:15px;color:#262f3e;letter-spacing:-0.60px;">10</div><div class="rh" style="top:385px;height:20px;overflow:hidden"></div><div style="left:12.6px;top:388px;font-size:13.1px;line-height:15px;color:#262f3e;letter-spacing:-0.60px;">11</div><div class="rh" style="top:405px;height:20px;overflow:hidden"></div><div style="left:12.1px;top:408px;font-size:13.1px;line-height:15px;color:#262f3e;letter-spacing:-0.60px;">12</div><div class="rh" style="top:425px;height:20px;overflow:hidden"></div><div style="left:12.1px;top:428px;font-size:13.1px;line-height:15px;color:#262f3e;letter-spacing:-0.60px;">13</div><div class="rh" style="top:445px;height:20px;overflow:hidden"></div><div style="left:12.1px;top:448px;font-size:13.1px;line-height:15px;color:#262f3e;letter-spacing:-0.60px;">14</div><div class="rh" style="top:465px;height:20px;overflow:hidden"></div><div style="left:12.1px;top:468px;font-size:13.1px;line-height:15px;color:#262f3e;letter-spacing:-0.60px;">15</div><div class="rh" style="top:485px;height:20px;overflow:hidden"></div><div style="left:12.1px;top:488px;font-size:13.1px;line-height:15px;color:#262f3e;letter-spacing:-0.60px;">16</div><div class="rh" style="top:505px;height:20px;overflow:hidden"></div><div style="left:12.1px;top:508px;font-size:13.1px;line-height:15px;color:#262f3e;letter-spacing:-0.60px;">17</div><div class="rh" style="top:525px;height:20px;overflow:hidden"></div><div style="left:12.1px;top:528px;font-size:13.1px;line-height:15px;color:#262f3e;letter-spacing:-0.60px;">18</div><div class="rh" style="top:545px;height:20px;overflow:hidden"></div><div style="left:12.1px;top:548px;font-size:13.1px;line-height:15px;color:#262f3e;letter-spacing:-0.60px;">19</div><div class="rh" style="top:565px;height:20px;overflow:hidden"></div><div style="left:12.1px;top:568px;font-size:13.1px;line-height:15px;color:#262f3e;letter-spacing:-0.60px;">20</div><div class="rh" style="top:585px;height:6px;overflow:hidden"></div><div style="left:12.1px;top:588px;font-size:13.1px;line-height:15px;color:#262f3e;letter-spacing:-0.60px;height:3px;overflow:hidden;">21</div>
<div style="left:32px;top:185px;width:172px;height:19px;background:#95b3d7"></div><div style="left:32px;top:205px;width:172px;height:19px;background:#ffc000"></div><div style="left:32px;top:225px;width:172px;height:19px;background:#ffc000"></div><div style="left:32px;top:245px;width:172px;height:19px;background:#ffc000"></div><div style="left:32px;top:265px;width:172px;height:19px;background:#ffc000"></div><div style="left:32px;top:285px;width:172px;height:19px;background:#ffc000"></div><div style="left:32px;top:305px;width:172px;height:19px;background:#ffc000"></div><div style="left:32px;top:325px;width:172px;height:19px;background:#ffc000"></div><div style="left:32px;top:204px;width:173px;height:1px;background:#000"></div><div style="left:32px;top:224px;width:173px;height:1px;background:#000"></div><div style="left:32px;top:244px;width:173px;height:1px;background:#000"></div><div style="left:32px;top:264px;width:173px;height:1px;background:#000"></div><div style="left:32px;top:284px;width:173px;height:1px;background:#000"></div><div style="left:32px;top:304px;width:173px;height:1px;background:#000"></div><div style="left:32px;top:324px;width:173px;height:1px;background:#000"></div><div style="left:32px;top:344px;width:173px;height:1px;background:#000"></div><div style="left:204px;top:185px;width:1px;height:160px;background:#000"></div><div style="left:47.3px;top:188px;font-size:13.1px;line-height:15px;color:#000;letter-spacing:0.31px;">Наименование товара</div><div style="left:33.8px;top:208px;font-size:13.1px;line-height:15px;color:#000;letter-spacing:0.37px;">Мясо</div><div style="left:33.8px;top:228px;font-size:13.1px;line-height:15px;color:#000;letter-spacing:-0.07px;">Сахар</div><div style="left:33.8px;top:248px;font-size:13.1px;line-height:15px;color:#000;letter-spacing:0.29px;">Картофель</div><div style="left:33.8px;top:268px;font-size:13.1px;line-height:15px;color:#000;letter-spacing:1.08px;">Молоко</div><div style="left:33.8px;top:288px;font-size:13.1px;line-height:15px;color:#000;letter-spacing:0.35px;">Мало растительное</div><div style="left:33.8px;top:308px;font-size:13.1px;line-height:15px;color:#000;letter-spacing:-0.02px;">Чай</div><div style="left:33.8px;top:328px;font-size:13.1px;line-height:15px;color:#000;letter-spacing:0.15px;">Рыба</div>
<div style="left:205px;top:201px;width:99px;height:27px;background:#fff"></div>
<div style="left:205px;top:201px;width:98px;height:3px;background:linear-gradient(#8391a6,#5f6e85 50%,#8a97ab)"></div><div style="left:207px;top:204px;width:94px;height:1px;background:#c5cdd9"></div>
<div style="left:205px;top:227px;width:98px;height:1px;background:#8493a8"></div>
<div style="left:205px;top:201px;width:3px;height:27px;background:linear-gradient(90deg,#77859b,#5f6e85 60%,#a3aebf)"></div>
<div style="left:299px;top:203px;width:3px;height:14px;background:linear-gradient(90deg,#8a97ab,#66748a)"></div><div style="left:302px;top:205px;width:1.500px;height:12px;background:#6f8fc2"></div>
<div style="left:284px;top:205px;width:15px;height:11px;background:#e6e9ee;border-left:1px solid #f7f8fa;border-top:1px solid #f7f8fa"></div>
<svg style="left:288px;top:212px" width="9" height="5"><path d="M0 0H8.500L4.250 4.500Z" fill="#0b0b0b"/></svg>
<div style="left:200.5px;top:197px;width:10px;height:10px;border:1px solid #7f8da2;border-radius:5px;background:radial-gradient(circle at 45% 40%,#ffffff 35%,#d5e4f6)"></div><div style="left:298px;top:197px;width:10px;height:10px;border:1px solid #7f8da2;border-radius:5px;background:radial-gradient(circle at 45% 40%,#ffffff 35%,#d5e4f6)"></div><div style="left:200.5px;top:222px;width:10px;height:10px;border:1px solid #7f8da2;border-radius:5px;background:radial-gradient(circle at 45% 40%,#ffffff 35%,#d5e4f6)"></div><div style="left:250px;top:198px;width:8px;height:8px;border:1px solid #7486a3;background:linear-gradient(#f2f8fe,#cfe6fa 50%,#e6f1fc)"></div><div style="left:250px;top:223px;width:8px;height:8px;border:1px solid #7486a3;background:linear-gradient(#f2f8fe,#cfe6fa 50%,#e6f1fc)"></div>
<div style="left:862px;top:165px;width:17px;height:426px;background:linear-gradient(90deg,#e9ecf2,#e1e5ec 50%,#d8dde6)"></div>
<div style="left:862px;top:165px;width:16px;height:8px;background:#fff;border:1px solid #8a96a7"></div><div style="left:865px;top:168px;width:10px;height:1px;background:#5d6776"></div>
<svg style="left:865px;top:177px" width="11" height="7"><path d="M0 6.500H11L5.500 0.500Z" fill="#4b4f57"/></svg>
<div style="left:862px;top:190px;width:15px;height:365px;border:1px solid #8d949e;border-radius:2px;background:linear-gradient(90deg,#f3f5f8,#e6e9ee 50%,#d5d9e1)"></div>
<div style="left:866px;top:369px;width:8px;height:1px;background:#7a818c;box-shadow:0 2px 0 #7a818c,0 4px 0 #7a818c,0 6px 0 #7a818c"></div>
<svg style="left:865px;top:581px" width="11" height="7"><path d="M0 .5H11L5.500 6.500Z" fill="#4b4f57"/></svg>
<div style="left:6px;top:591px;width:873px;height:1px;background:#fff"></div>
<div style="left:6px;top:592px;width:873px;height:16px;background:#dfe3ec;border-top:1px solid #9aa2ad"></div>
<svg style="left:10px;top:595px" width="56" height="10" viewBox="0 0 56 10"><g fill="#434a57"><rect x="2" y="1.300" width="1.500" height="7.400"/><path d="M8.500 1.300V8.700L4 5Z"/><path d="M23.500 1.300V8.700L18.800 5Z"/><path d="M31.800 1.300V8.700L36.500 5Z"/><path d="M46 1.300V8.700L50.500 5Z"/><rect x="50.700" y="1.300" width="1.500" height="7.400"/></g></svg>
<svg style="left:66px;top:592px" width="220" height="17" viewBox="0 0 220 17">
<defs><linearGradient id="stg" x1="0" y1="0" x2="0" y2="1"><stop offset="0" stop-color="#e1e5ed"/><stop offset="1" stop-color="#f0f3f8"/></linearGradient></defs>
<path d="M2.500 .5 V13 Q2.500 15.500 5 15.500 H60 L56 .5Z" fill="url(#stg)" stroke="#8e96a3"/>
<path d="M119 .5 L107.500 13 Q105.500 15.500 102 15.500 H156.500 Q159 15.500 161 13 L172.500 .5Z" fill="url(#stg)" stroke="#8e96a3"/>
<path d="M172.500 .5 L161 13 Q159 15.500 156.500 15.500 H187 Q189.500 15.500 191.500 13 L203 .5Z" fill="url(#stg)" stroke="#8e96a3"/>
<path d="M56 0 V13 Q56 15.500 58.500 15.500 H102 Q105.500 15.500 107.500 13 L119 0Z" fill="#fff" stroke="#6e7888"/>
<rect x="56.600" y="-.5" width="61.500" height="1.600" fill="#fff"/>
</svg>
<div style="left:78.5px;top:592px;font-size:13.1px;line-height:15px;color:#2b3340;letter-spacing:-0.36px;">Лист1</div><div style="left:131.2px;top:593px;font-size:13.1px;line-height:15px;color:#222;letter-spacing:-0.36px;font-weight:bold;">Лист2</div><div style="left:185.1px;top:593px;font-size:13.1px;line-height:15px;color:#2b3340;letter-spacing:-0.56px;">Лист3</div><svg style="left:239px;top:593px" width="15" height="13"><rect x="4.500" y="3.500" width="9.500" height="7" rx="1.200" fill="#fff" stroke="#4f6fa5"/><path d="M6 11.500H12" stroke="#4f6fa5"/><path d="M3.500 -.3 L4.600 2 L7 2.300 L5.200 4 L5.700 6.500 L3.500 5.300 L1.300 6.500 L1.800 4 L0 2.300 L2.400 2Z" fill="#f7bf35" stroke="#c98a12" stroke-width=".6"/></svg>
<div style="left:520px;top:593px;width:359px;height:15px;background:linear-gradient(#e6e9ef,#d9dde6)"></div>
<div style="left:520px;top:593px;width:8px;height:15px;background:#fff;border:1px solid #8a96a7"></div><div style="left:523.500px;top:596px;width:1px;height:9px;background:#4d5665"></div>
<svg style="left:533px;top:595px" width="7" height="11"><path d="M6.500 0V11L.5 5.500Z" fill="#4b4f57"/></svg>
<div style="left:545px;top:592px;width:263px;height:15px;border:1px solid #8d949e;border-radius:2px;background:linear-gradient(#f3f5f8,#e6e9ee 50%,#d5d9e1)"></div>
<div style="left:672px;top:596px;width:1px;height:8px;background:#697282;box-shadow:2px 0 0 #697282,4px 0 0 #697282,6px 0 0 #697282"></div>
<svg style="left:842px;top:595px" width="7" height="11"><path d="M.5 0V11L6.500 5.500Z" fill="#4b4f57"/></svg>
<div style="left:854px;top:593px;width:8px;height:15px;background:#fff;border:1px solid #8a96a7"></div><div style="left:857.500px;top:596px;width:1px;height:9px;background:#4d5665"></div>
<div style="left:6px;top:608px;width:873px;height:22px;background:linear-gradient(#e4e9f1 0,#d9e0ea 40%,#cbd4e1 48%,#c6d0de 100%);border-top:1px solid #8d949e"></div>
<div style="left:60px;top:611px;width:2px;height:18px;border-left:1px solid #9fabbd;border-right:1px solid #f0f3f8"></div>
<div style="left:95px;top:611px;width:2px;height:18px;border-left:1px solid #9fabbd;border-right:1px solid #f0f3f8"></div>
<svg style="left:70px;top:612px" width="16" height="14"><rect x="2.500" y="2.500" width="12.500" height="11" fill="#fff" stroke="#5a7ab5"/><rect x="3" y="3" width="11.500" height="2.500" fill="#4f74b8"/><path d="M3 8.500H14.500M3 11H14.500M7 6V13M11 6V13" stroke="#9db3d6" stroke-width="1"/><circle cx="3.200" cy="3.200" r="2.900" fill="#e4683a" stroke="#b8441b" stroke-width=".5"/></svg>
<div style="left:622px;top:611px;width:2px;height:18px;border-left:1px solid #9fabbd;border-right:1px solid #f0f3f8"></div>
<div style="left:626px;top:610px;width:20px;height:19px;border:1px solid #d8a02c;border-radius:2px;background:linear-gradient(#fdeaae,#fbd067)"></div>
<svg style="left:629px;top:613px" width="14" height="13"><rect x=".5" y=".5" width="13" height="12" fill="#fff" stroke="#5d6675"/><path d="M.5 4.500H13.500M.5 8.500H13.500M5 .5V12.500M9.500 .5V12.500" stroke="#5d6675" stroke-width="1"/></svg>
<svg style="left:648px;top:612px" width="15" height="14"><rect x=".5" y=".5" width="14" height="13" fill="#dfe4eb" stroke="#5d6675"/><rect x="3.500" y="3.500" width="8" height="7" fill="#fff" stroke="#5d6675"/><path d="M5 6H10M5 8H10" stroke="#8a93a3"/></svg>
<svg style="left:666px;top:612px" width="15" height="14"><rect x=".5" y=".5" width="14" height="13" fill="#fff" stroke="#5d6675"/><path d="M.5 9H14.500M7.500 .5V9" stroke="#5d6675" stroke-width="1.800"/></svg>
<div style="left:744px;top:619px;width:100px;height:1px;background:#9aa3b1;box-shadow:0 1px 0 #eef1f6"></div>
<svg style="left:728px;top:611px" width="17" height="17"><circle cx="8.500" cy="8.500" r="7.500" fill="#f6f8fb" stroke="#7a8494" stroke-width="1.100"/><rect x="4.500" y="7.500" width="8" height="2" fill="#3c4350"/></svg>
<svg style="left:843px;top:611px" width="17" height="17"><circle cx="8.500" cy="8.500" r="7.500" fill="#f6f8fb" stroke="#7a8494" stroke-width="1.100"/><rect x="4.500" y="7.500" width="8" height="2" fill="#3c4350"/><rect x="7.500" y="4.500" width="2" height="8" fill="#3c4350"/></svg>
<svg style="left:789px;top:612px" width="11" height="14"><path d="M1 .5H10V8L5.500 13L1 8Z" fill="#f4f6f9" stroke="#667183"/></svg>
<svg style="left:866px;top:618px" width="12" height="12"><g fill="#94a0b1"><rect x="8" y="0" width="2" height="2"/><rect x="4" y="4" width="2" height="2"/><rect x="8" y="4" width="2" height="2"/><rect x="0" y="8" width="2" height="2"/><rect x="4" y="8" width="2" height="2"/><rect x="8" y="8" width="2" height="2"/></g></svg>
<div style="left:13.8px;top:613px;font-size:11.5px;line-height:12px;color:#262626;letter-spacing:0.36px;">Готово</div><div style="left:691.0px;top:613px;font-size:11.5px;line-height:12px;color:#262626;letter-spacing:-0.30px;">100%</div><div style="left:5px;top:136px;width:1px;height:495px;background:#68717f"></div><div style="left:878px;top:136px;width:1px;height:495px;background:#68717f"></div>
<div style="left:4px;top:50px;width:1px;height:582px;background:#e1f0fd"></div><div style="left:879px;top:50px;width:1px;height:582px;background:#e1f0fd"></div>
<div style="left:5px;top:630px;width:874px;height:1px;background:#5d6673"></div><div style="left:4px;top:631px;width:876px;height:1px;background:#e6f2fd"></div>
<div style="left:0;top:632px;width:885px;height:4px;background:#b3d7f9"></div><div style="left:0;top:636px;width:885px;height:1px;background:#f1f8fe"></div>
<div style="left:0;top:637px;width:885px;height:1px;background:#2d3642"></div><div style="left:0;top:638px;width:885px;height:2px;background:linear-gradient(#6f767e,#868b91)"></div>
<div style="left:0;top:630px;width:7px;height:8px;background:radial-gradient(circle at 7px 0,rgba(0,0,0,0) 6.200px,#1e242c 7px,#1e242c 7.600px,#7f858c 8.200px)"></div>
<div style="left:878px;top:630px;width:7px;height:8px;background:radial-gradient(circle at 0 0,rgba(0,0,0,0) 6.200px,#1e242c 7px,#1e242c 7.600px,#7f858c 8.200px)"></div>
<div style="left:281px;top:215px;width:158px;height:218px;background:#fff;border:1px solid #9a9fa8;border-radius:2px;box-shadow:2px 2px 3px rgba(0,0,0,.28)"></div>
<div style="left:307px;top:218px;width:1px;height:213px;background:#e4e6ea"></div>
<div style="left:282px;top:335px;width:156px;height:22px;border:1px solid #efc565;border-radius:3px;background:linear-gradient(#fdebb4,#fde396 48%,#fcdb80 55%,#fde39a)"></div><div style="left:314.9px;top:222px;font-size:11.5px;line-height:12px;color:#1e1e1e;letter-spacing:-0.12px;">В<u>ы</u>резать</div><div style="left:314.9px;top:244px;font-size:11.5px;line-height:12px;color:#1e1e1e;letter-spacing:0.28px;"><u>К</u>опировать</div><div style="left:314.9px;top:266px;font-size:11.5px;line-height:12px;color:#1e1e1e;letter-spacing:-0.18px;">Вставит<u>ь</u></div><div style="left:314.9px;top:292px;font-size:11.5px;line-height:12px;color:#1e1e1e;letter-spacing:-0.21px;">Сво<u>й</u>ства</div><div style="left:314.9px;top:314px;font-size:11.5px;line-height:12px;color:#1e1e1e;letter-spacing:-0.10px;">Ис<u>х</u>одный текст</div><div style="left:314.9px;top:339px;font-size:11.5px;line-height:12px;color:#1e1e1e;letter-spacing:0.05px;">Об<u>ъ</u>ект ComboBox</div><div style="left:314.9px;top:365px;font-size:11.5px;line-height:12px;color:#1e1e1e;letter-spacing:0.30px;"><u>Г</u>руппировка</div><div style="left:314.9px;top:388px;font-size:11.5px;line-height:12px;color:#1e1e1e;letter-spacing:0.37px;">Пор<u>я</u>док</div><div style="left:314.9px;top:414px;font-size:11.5px;line-height:12px;color:#1e1e1e;letter-spacing:-0.06px;"><u>Ф</u>ормат объекта...</div><div class="msep" style="top:284px"></div><div class="msep" style="top:332px"></div><div class="msep" style="top:359px"></div><div class="msep" style="top:406px"></div><svg style="left:424px;top:342px" width="5" height="8"><path d="M0 0V7.500L4.500 3.750Z" fill="#6a6a6a"/></svg><svg style="left:424px;top:368px" width="5" height="8"><path d="M0 0V7.500L4.500 3.750Z" fill="#6a6a6a"/></svg><svg style="left:424px;top:390px" width="5" height="8"><path d="M0 0V7.500L4.500 3.750Z" fill="#6a6a6a"/></svg><svg style="left:0;top:0" width="885" height="640"><path d="M291.300 221.300 L295.600 229.800 M297.200 221.300 L292.900 229.800" stroke="#4d5562" stroke-width="1.500" stroke-linecap="round"/><ellipse cx="291.400" cy="232" rx="1.700" ry="2.100" fill="none" stroke="#2f5fc4" stroke-width="1.600"/><ellipse cx="296.600" cy="232" rx="1.700" ry="2.100" fill="none" stroke="#2f5fc4" stroke-width="1.600"/><path d="M286.500 244.500 H292 L294.500 247 V252.500 H286.500Z" fill="#fff" stroke="#3557a5"/><path d="M291.500 247.500 H298 L300.500 250 V256 H291.500Z" fill="#fff" stroke="#3557a5"/><path d="M293.500 251H298.500M293.500 253.500H298.500" stroke="#6f8fd0"/><path d="M288 247.500H290.500M288 249.500H290.500" stroke="#6f8fd0"/><rect x="286.500" y="267.500" width="11" height="11" rx="1" fill="#e9b545" stroke="#a7761a"/><rect x="289.500" y="265.500" width="5" height="3" fill="#c9ccd3" stroke="#6d7686" stroke-width=".8"/><rect x="292.500" y="271.500" width="9" height="7.500" fill="#fff" stroke="#3557a5"/><path d="M294.500 274.500H299.500M294.500 276.500H299.500" stroke="#8fa6d4"/><rect x="287.500" y="296.500" width="11" height="8.500" fill="#fff" stroke="#3557a5"/><path d="M289 299.500H293M289 302H297" stroke="#8fa6d4"/><path d="M289 295 L293 291.500 L298 294.500 L301.500 292 V297.500 L297 299 L293.500 296.500Z" fill="#f2c65a" stroke="#a97a14" stroke-width=".7"/><path d="M299 292.500 L301.800 291 V297 L299 296.500Z" fill="#3fae49"/><rect x="291.500" y="312.500" width="10" height="8.500" fill="#fff" stroke="#3557a5"/><path d="M293.500 315H300M293.500 317.500H300" stroke="#8fa6d4"/><circle cx="290" cy="319.500" r="3.600" fill="#e8f0fb" stroke="#6b7c93" stroke-width="1.200"/><path d="M292.500 322.300 L296 326" stroke="#c98a2b" stroke-width="2.200" stroke-linecap="round"/><path d="M295 415.800 Q298.300 418.500 296.600 421.800 Q294.500 425.800 290 427 Q287.300 427.500 289.300 425.800 Q292.800 423.800 293.800 419.500Z" fill="#3c78d8"/><path d="M292 426.300 Q295 424.800 296.300 422" stroke="#a9c8f4" stroke-width=".9" fill="none"/><path d="M286 418.400 L290 413.200 L295.500 417 L290.500 422.600Z" fill="#f4f7fc" stroke="#26398a" stroke-width=".9" stroke-linejoin="round"/><path d="M288 419 L290.500 422 L293.500 418.800Z" fill="#c9daf3"/><ellipse cx="290" cy="414" rx="1.600" ry="1.900" fill="none" stroke="#4b6bb8" stroke-width=".9"/><path d="M291 413.500 L291.200 417.600" stroke="#6b7380" stroke-width="1.300"/><path d="M301.600 418.600 L298.800 422.400" stroke="#f0b429" stroke-width="2.700" stroke-linecap="round"/><path d="M299.400 421.200 L298 423.200" stroke="#c9ccd3" stroke-width="2.700"/><path d="M298.600 422 Q298.800 425.500 294 427 Q296.300 424.500 296.400 421.800Z" fill="#5f8fe0" stroke="#2f5fc4" stroke-width=".5"/></svg>
<div style="left:437px;top:335px;width:80px;height:26px;background:#fff;border:1px solid #9a9fa8;border-radius:2px;box-shadow:2px 2px 3px rgba(0,0,0,.28)"></div>
<div style="left:471.9px;top:342px;font-size:11.5px;line-height:12px;color:#1e1e1e;letter-spacing:0.26px;"><u>E</u>dit</div><div style="left:306px;top:334px;width:133px;height:23.500px;border:4px solid #ed1c24;border-radius:9px"></div>
<div style="left:458px;top:336px;width:50.500px;height:30.200px;border:4.800px solid #ed1c24;border-radius:10px"></div>
</body></html>
